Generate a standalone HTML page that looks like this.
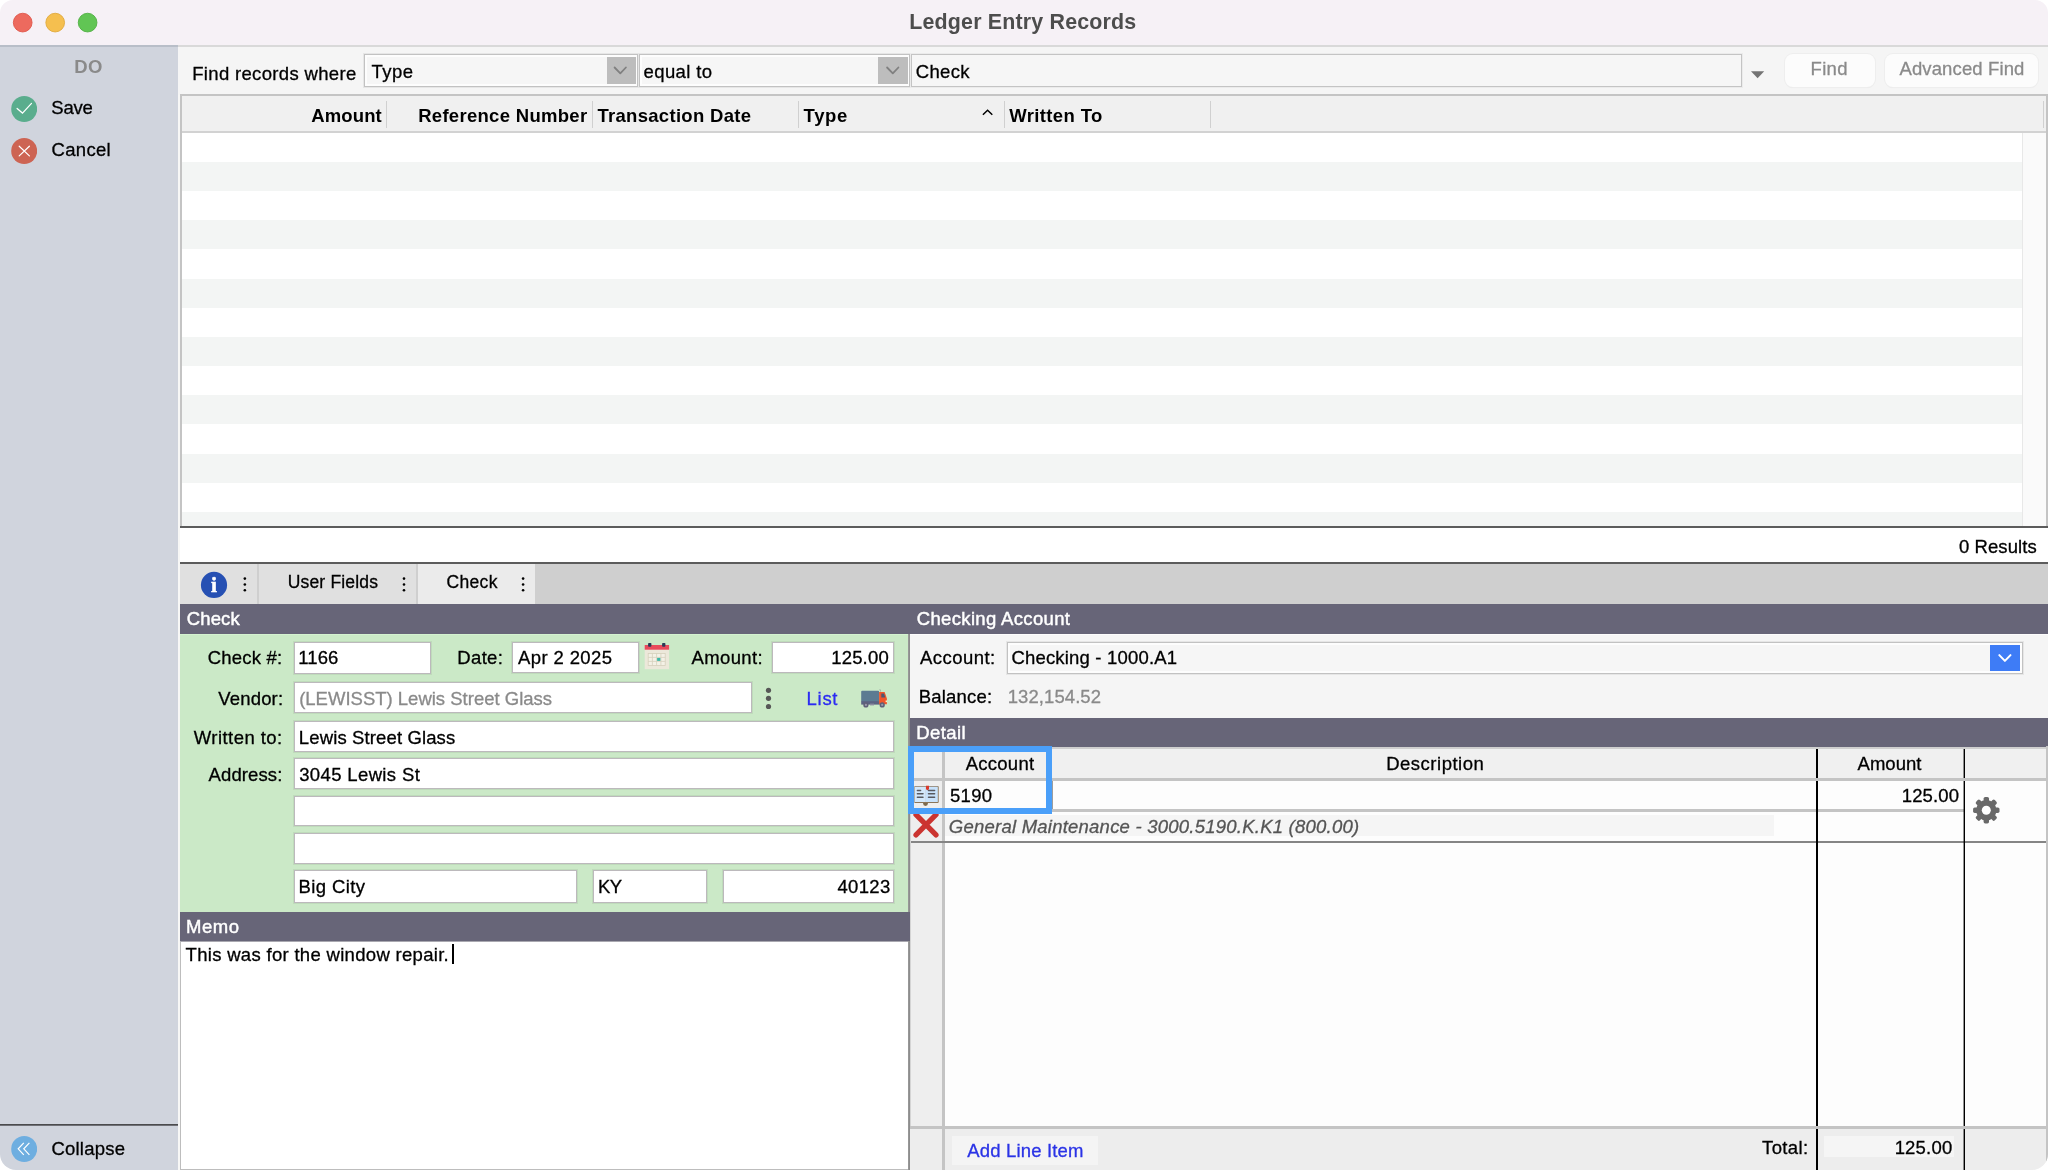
<!DOCTYPE html>
<html lang="en">
<head>
<meta charset="utf-8">
<title>Ledger Entry Records</title>
<style>
*{box-sizing:border-box;margin:0;padding:0}
html,body{width:2048px;height:1170px;background:#fff;overflow:hidden}
body{font-family:"Liberation Sans",sans-serif;font-size:18.5px;color:#000;--bo:16.4px}
#win{position:absolute;left:0;top:0;width:2048px;height:1170px;overflow:hidden;border-radius:13px 13px 16px 16px;background:#fff;will-change:transform}
.abs{position:absolute}
.t{position:absolute;white-space:nowrap;line-height:20px;height:20px;font-size:18.5px;-webkit-text-stroke:0.3px currentColor}
.b{-webkit-text-stroke:0}
.b{font-weight:bold}
.r{text-align:right}
.w{color:#fff;-webkit-text-stroke:0.45px #fff}
.g{color:#8a8a8a}
/* title bar */
#titlebar{left:0;top:0;width:2048px;height:45px;background:#f6f1f6}
#tline{left:0;top:45px;width:2048px;height:2px;background:#d9d9d9}
.tl{position:absolute;top:12.8px;width:19.6px;height:19.6px;border-radius:50%}
/* sidebar */
#side{left:0;top:47px;width:178px;height:1123px;background:#d0d4dd}
#sideline{left:0;top:45px;width:178px;height:2px;background:#b8bec8}
/* find bar */
#find{left:178px;top:47px;width:1870px;height:48px;background:#f5f5f5}
.sel{position:absolute;top:54px;height:33px;background:#f6f6f6;border:1px solid #c2c2c2;box-shadow:0 0 0 1px #e6e6e6,inset 0 0 0 2px #fdfdfd}
.tin{position:absolute;top:54px;height:33px;background:#f6f6f6;border:1px solid #c4c4c4;box-shadow:0 0 0 1px #ebebeb}
.ddb{position:absolute;top:57px;width:30px;height:27px;background:#bdbdbd}
.btn{position:absolute;top:54px;height:33px;border-radius:8px;background:#fcfcfc;box-shadow:0 0 0 1px #eeeeee,0 1px 1px rgba(0,0,0,.06)}
/* grid */
#grid{left:180px;top:94px;width:1868px;height:432px;background:#fff;border:2px solid #c4c4c4;border-bottom:none}
#ghead{left:182px;top:96px;width:1864px;height:35px;background:#f0f0f0}
#gline{left:182px;top:131px;width:1864px;height:2px;background:#d2d2d2}
.row{position:absolute;left:182px;width:1840px;background:#f3f5f4}
.hs{position:absolute;top:101px;width:1px;height:27px;background:#d0d0d0}
#scroll{left:2022px;top:133px;width:24px;height:393px;background:#fafafa;border-left:1px solid #e8e8e8}
.dark{position:absolute;height:2px;background:#5c5c5c}
/* tabs */
#tabs{left:180px;top:564px;width:1868px;height:40px;background:#cfcfcf}
.tab{position:absolute;top:564px;height:40px;background:#e0e0e0}
/* section headers */
.sh{position:absolute;height:30px;background:#676578}
/* form */
#green{left:180px;top:634px;width:728px;height:278px;background:#cbe9c7;box-shadow:inset 0 1px 0 #d4f2d0}
.in{position:absolute;background:#fff;border:1px solid #bcb9bc;box-shadow:0 0 0 1px rgba(0,0,0,.06)}
#memo{left:180px;top:941px;width:729px;height:229px;background:#fff;border-left:1px solid #bdbdbd;border-bottom:1px solid #bdbdbd;border-top:1px solid #a9a8b0}
.vsep{position:absolute;left:908px;width:2px;background:linear-gradient(90deg,#979797 0 1px,#8d8d8d 1px 2px)}
#rpanel{left:910px;top:634px;width:1138px;height:84px;background:#f5f5f5;border-top:1px solid #fcfcfc}
/* detail */
#dt{left:910px;top:747px;width:1138px;height:423px;background:#fdfdfd}
#dth{left:910px;top:747px;width:1138px;height:31px;background:#f0f0f0;border-top:2px solid #cfcfcf}
#dticon{left:910px;top:780px;width:32px;height:390px;background:#eeeeee;border-left:1px solid #d4d4d4}
#dtfoot{left:910px;top:1128px;width:1138px;height:42px;background:#ededed}
.gl{position:absolute;background:#c4c4c4}
.bl{position:absolute;background:#000;width:2px}
#ring{left:908px;top:746px;width:144px;height:68px;border:6px solid #4a9ff9}
</style>
</head>
<body>
<div id="win">

<!-- ===== title bar ===== -->
<div id="titlebar" class="abs"></div>
<div id="tline" class="abs"></div>
<svg class="abs" style="left:0;top:0" width="110" height="45" viewBox="0 0 110 45"><circle cx="22.7" cy="22.6" r="9.35" fill="#ed6a5e" stroke="#e0574b" stroke-width="0.9"/><circle cx="55.2" cy="22.6" r="9.35" fill="#f5bf4f" stroke="#e0a93c" stroke-width="0.9"/><circle cx="87.6" cy="22.6" r="9.35" fill="#61c554" stroke="#50b043" stroke-width="0.9"/></svg>
<div class="t b" style="left:909.29px;top:8px;font-size:21.4px;line-height:28px;height:28px;color:#4d4d4d;letter-spacing:0.181px">Ledger Entry Records</div>

<!-- ===== sidebar ===== -->
<div class="abs" style="left:178px;top:47px;width:2px;height:1123px;background:#f7f7f6"></div>
<div id="side" class="abs"></div>
<div id="sideline" class="abs"></div>
<div class="t b" style="left:74.15px;top:57px;color:#8a8a8a;letter-spacing:0.545px">DO</div>
<svg class="abs" style="left:11px;top:95.8px" width="26.4" height="26.4" viewBox="0 0 26.4 26.4"><circle cx="13.2" cy="13" r="13" fill="#5aad8d"/><path d="M6.1 12.5 L11.5 17.1 L20.5 7.4" fill="none" stroke="#fff" stroke-width="1.25" stroke-linecap="round" stroke-linejoin="miter"/></svg>
<div class="t" style="left:51.29px;top:98px;letter-spacing:-0.184px">Save</div>
<svg class="abs" style="left:11px;top:137.8px" width="26.4" height="26.4" viewBox="0 0 26.4 26.4"><circle cx="13.2" cy="13" r="13" fill="#cd6453"/><path d="M8.2 8.2 L18.4 17.9 M18.4 8.2 L8.2 17.9" fill="none" stroke="#fff" stroke-width="1.2" stroke-linecap="round"/></svg>
<div class="t" style="left:51.45px;top:140px;letter-spacing:0.341px">Cancel</div>
<div class="dark" style="left:0;top:1124px;width:178px;background:linear-gradient(#4b4b4d 0 1px,#6f7076 1px 2px)"></div>
<svg class="abs" style="left:11px;top:1136px" width="26.4" height="26.4" viewBox="0 0 26.4 26.4"><circle cx="13.2" cy="13" r="13" fill="#6eaee0"/><path d="M12.8 6.8 L7.2 12.8 L12.8 18.8 M18.4 6.8 L12.8 12.8 L18.4 18.8" fill="none" stroke="#fff" stroke-width="1.2" stroke-linecap="butt" stroke-linejoin="miter"/></svg>
<div class="t" style="left:51.45px;top:1139px;letter-spacing:0.226px">Collapse</div>

<!-- ===== find bar ===== -->
<div id="find" class="abs"></div>
<div class="t" style="left:192.18px;top:64px;letter-spacing:0.338px">Find records where</div>
<div class="sel" style="left:364px;width:274px"></div>
<div class="ddb" style="left:606.5px;width:29.3px"></div>
<svg class="abs" style="left:606px;top:57px" width="30" height="27" viewBox="0 0 30 27"><path d="M8.6 10.5 L14.3 16.4 L19.9 10.5" fill="none" stroke="#808080" stroke-width="1.8" stroke-linecap="round" stroke-linejoin="round"/></svg>
<div class="t" style="left:371.60px;top:62px;letter-spacing:0.433px">Type</div>
<div class="sel" style="left:639px;width:271px"></div>
<div class="ddb" style="left:877.5px;width:30.5px"></div>
<svg class="abs" style="left:878px;top:57px" width="30" height="27" viewBox="0 0 30 27"><path d="M9.1 10.5 L14.8 16.4 L20.4 10.5" fill="none" stroke="#808080" stroke-width="1.8" stroke-linecap="round" stroke-linejoin="round"/></svg>
<div class="t" style="left:643.60px;top:62px;letter-spacing:0.367px">equal to</div>
<div class="tin" style="left:911px;width:831px"></div>
<div class="t" style="left:915.73px;top:62px;letter-spacing:0.359px">Check</div>
<svg class="abs" style="left:1748px;top:68px" width="20" height="14" viewBox="0 0 20 14"><path d="M3 3.2 L16.2 3.2 L9.6 10.2 Z" fill="#747474"/></svg>
<div class="btn" style="left:1785px;width:90px"></div>
<div class="t g" style="left:1810.56px;top:59px;letter-spacing:0.323px">Find</div>
<div class="btn" style="left:1885px;width:153px"></div>
<div class="t g" style="left:1899.45px;top:59px;letter-spacing:0.124px">Advanced Find</div>

<!-- ===== results grid ===== -->
<div id="grid" class="abs"></div>
<div id="ghead" class="abs"></div>
<div id="gline" class="abs"></div>
<div class="row" style="top:162px;height:29px"></div>
<div class="row" style="top:220px;height:29px"></div>
<div class="row" style="top:279px;height:29px"></div>
<div class="row" style="top:337px;height:29px"></div>
<div class="row" style="top:395px;height:29px"></div>
<div class="row" style="top:454px;height:29px"></div>
<div class="row" style="top:512px;height:14px"></div>
<div id="scroll" class="abs"></div>
<div class="t b" style="left:311.20px;top:106px;letter-spacing:0.145px">Amount</div>
<div class="t b" style="left:418.18px;top:106px;letter-spacing:0.295px">Reference Number</div>
<div class="t b" style="left:597.42px;top:106px;letter-spacing:0.299px">Transaction Date</div>
<div class="t b" style="left:803.56px;top:106px;letter-spacing:0.661px">Type</div>
<div class="t b" style="left:1009.28px;top:106px;letter-spacing:0.359px">Written To</div>
<svg class="abs" style="left:978px;top:106px" width="20" height="14" viewBox="0 0 20 14"><path d="M4.9 8.8 L9.6 4.3 L14.3 8.8" fill="none" stroke="#000" stroke-width="1.5" stroke-linecap="butt" stroke-linejoin="miter"/></svg>
<div class="hs" style="left:386px"></div>
<div class="hs" style="left:592px"></div>
<div class="hs" style="left:798px"></div>
<div class="hs" style="left:1004px"></div>
<div class="hs" style="left:1210px"></div>
<div class="hs" style="left:2043px"></div>
<div class="dark" style="left:180px;top:526px;width:1868px"></div>
<div class="t" style="left:1958.88px;top:537px;letter-spacing:0.093px">0 Results</div>
<div class="dark" style="left:180px;top:562px;width:1868px"></div>

<!-- ===== tabs ===== -->
<div id="tabs" class="abs"></div>
<div class="tab" style="left:180px;width:77px"></div>
<div class="tab" style="left:259px;width:157px"></div>
<div class="tab" style="left:418px;width:117px;background:#ebebeb"></div>
<svg class="abs" style="left:200px;top:571px" width="28" height="28" viewBox="0 0 28 28"><circle cx="14" cy="13.9" r="13.1" fill="#2650b3"/><text x="14.1" y="21.3" text-anchor="middle" font-family="Liberation Serif, serif" font-weight="bold" font-size="21.5" fill="#fff" stroke="#fff" stroke-width="0.5">i</text></svg>
<svg class="abs" style="left:241px;top:574px" width="8" height="20" viewBox="0 0 8 20"><circle cx="3.85" cy="4.6" r="1.3"/><circle cx="3.85" cy="10.5" r="1.3"/><circle cx="3.85" cy="16.3" r="1.3"/></svg>
<svg class="abs" style="left:400px;top:574px" width="8" height="20" viewBox="0 0 8 20"><circle cx="4" cy="4.6" r="1.3"/><circle cx="4" cy="10.5" r="1.3"/><circle cx="4" cy="16.3" r="1.3"/></svg>
<svg class="abs" style="left:519px;top:574px" width="8" height="20" viewBox="0 0 8 20"><circle cx="4.1" cy="4.6" r="1.3"/><circle cx="4.1" cy="10.5" r="1.3"/><circle cx="4.1" cy="16.3" r="1.3"/></svg>
<div class="t" style="left:287.66px;top:572px;letter-spacing:0.189px;font-size:17.5px">User Fields</div>
<div class="t" style="left:446.53px;top:572px;letter-spacing:0.324px;font-size:17.5px">Check</div>

<!-- ===== left: check form ===== -->
<div class="sh" style="left:180px;top:604px;width:1868px"></div>
<div class="t w" style="left:186.65px;top:609px;letter-spacing:0.182px">Check</div>
<div class="t w" style="left:916.76px;top:609px;letter-spacing:0.338px">Checking Account</div>
<div id="green" class="abs"></div>
<div class="t" style="left:207.82px;top:648px;letter-spacing:0.201px">Check #:</div>
<div class="in" style="left:294px;top:642px;width:137px;height:32px"></div>
<div class="t" style="left:298.19px;top:648px;letter-spacing:0.143px">1166</div>
<div class="t" style="left:457.37px;top:648px;letter-spacing:0.319px">Date:</div>
<div class="in" style="left:512px;top:642px;width:127px;height:31px"></div>
<div class="t" style="left:518.05px;top:648px;letter-spacing:0.381px">Apr 2 2025</div>
<svg class="abs" style="left:644px;top:642px" width="26" height="28" viewBox="0 0 26 28"><rect x="0.7" y="3" width="24.4" height="24.2" fill="#ece8da"/><rect x="0.7" y="3" width="24.4" height="4.7" fill="#e94b5b"/><rect x="4.1" y="1" width="3.3" height="3.7" rx="0.8" fill="#2b3a55"/><rect x="18.1" y="1" width="3.3" height="3.7" rx="0.8" fill="#2b3a55"/><rect x="4.2" y="11.4" width="17" height="12" fill="#f4f1e6" stroke="#d5d0bc" stroke-width="0.8"/><path d="M8.4 11.4 V23.4 M12.6 11.4 V23.4 M16.9 11.4 V23.4 M4.2 15.4 H21.2 M4.2 19.4 H21.2" stroke="#d5d0bc" stroke-width="0.8" fill="none"/><rect x="13.1" y="15.9" width="3.3" height="3" fill="#3db7a6"/></svg>
<div class="t" style="left:691.56px;top:648px;letter-spacing:0.361px">Amount:</div>
<div class="in" style="left:772px;top:642px;width:122px;height:31px"></div>
<div class="t" style="left:831.20px;top:648px;letter-spacing:0.182px">125.00</div>

<div class="t" style="left:218.34px;top:689px;letter-spacing:0.159px">Vendor:</div>
<div class="in" style="left:294px;top:682px;width:458px;height:31px"></div>
<div class="t g" style="left:299.17px;top:689px;letter-spacing:-0.001px">(LEWISST) Lewis Street Glass</div>
<svg class="abs" style="left:764px;top:686px" width="10" height="26" viewBox="0 0 10 26"><circle cx="4.5" cy="4.3" r="2.6" fill="#575757"/><circle cx="4.5" cy="12.3" r="2.6" fill="#575757"/><circle cx="4.5" cy="20.5" r="2.6" fill="#575757"/></svg>
<div class="t" style="left:806.56px;top:689px;color:#2b2bf2;letter-spacing:0.726px">List</div>
<svg class="abs" style="left:859px;top:687px" width="30" height="22" viewBox="0 0 30 22"><path d="M20.9 2.2 L21.6 4.6" stroke="#8a8f99" stroke-width="0.7" fill="none"/><rect x="2.2" y="3.8" width="17.9" height="11.2" rx="0.9" fill="#5c7b92"/><rect x="2.2" y="14.2" width="18.5" height="3.4" fill="#5b6282"/><path d="M20.1 5.1 H25.6 L27.9 11.4 V17.2 H20.1 Z" fill="#f1562b"/><path d="M22.3 6.4 H25 L26.3 10.6 H22.3 Z" fill="#4d5873"/><rect x="26.6" y="13.5" width="1.4" height="1.6" fill="#fff3c4"/><circle cx="6.9" cy="17.9" r="2.6" fill="#5f5f77"/><circle cx="6.9" cy="17.9" r="1.1" fill="#9a9aae"/><circle cx="23.2" cy="17.9" r="2.6" fill="#5f5f77"/><circle cx="23.2" cy="17.9" r="1.1" fill="#9a9aae"/><rect x="11" y="16.6" width="4" height="1.8" fill="#8a8aa0"/></svg>

<div class="t" style="left:193.69px;top:728px;letter-spacing:0.457px">Written to:</div>
<div class="in" style="left:294px;top:721px;width:600px;height:31px"></div>
<div class="t" style="left:298.87px;top:728px;letter-spacing:0.125px">Lewis Street Glass</div>

<div class="t" style="left:208.58px;top:765px;letter-spacing:0.101px">Address:</div>
<div class="in" style="left:294px;top:758px;width:600px;height:31px"></div>
<div class="t" style="left:299.23px;top:765px;letter-spacing:0.362px">3045 Lewis St</div>
<div class="in" style="left:294px;top:796px;width:600px;height:30px"></div>
<div class="in" style="left:294px;top:833px;width:600px;height:31px"></div>
<div class="in" style="left:294px;top:870px;width:283px;height:33px"></div>
<div class="t" style="left:298.58px;top:877px;letter-spacing:0.380px">Big City</div>
<div class="in" style="left:593px;top:870px;width:114px;height:33px"></div>
<div class="t" style="left:598.06px;top:877px;letter-spacing:-0.517px">KY</div>
<div class="in" style="left:723px;top:870px;width:171px;height:33px"></div>
<div class="t" style="left:837.39px;top:877px;letter-spacing:0.341px">40123</div>

<div class="sh" style="left:180px;top:912px;width:730px;height:29px"></div>
<div class="t w" style="left:185.96px;top:917px;letter-spacing:0.596px">Memo</div>
<div id="memo" class="abs"></div>
<div class="t" style="left:185.58px;top:945px;letter-spacing:0.307px">This was for the window repair.</div>
<div class="abs" style="left:452px;top:944px;width:2px;height:20px;background:#000"></div>


<!-- ===== right: checking account ===== -->
<div id="rpanel" class="abs"></div>
<div class="t" style="left:920.05px;top:648px;letter-spacing:0.452px">Account:</div>
<div class="sel" style="left:1007px;top:642px;width:1016px;height:32px"></div>
<div class="abs" style="left:1989.7px;top:644.8px;width:30.5px;height:26.2px;background:#3e7cf6"></div>
<svg class="abs" style="left:1990px;top:645px" width="30" height="26" viewBox="0 0 30 26"><path d="M9.3 10.1 L14.9 15.9 L20.5 10.1" fill="none" stroke="#fff" stroke-width="2" stroke-linecap="round" stroke-linejoin="round"/></svg>
<div class="t" style="left:1011.45px;top:648px;letter-spacing:0.183px">Checking - 1000.A1</div>
<div class="t" style="left:918.75px;top:687px;letter-spacing:0.208px">Balance:</div>
<div class="t g" style="left:1007.63px;top:687px;letter-spacing:0.091px">132,154.52</div>
<div class="sh" style="left:910px;top:718px;width:1138px;height:29px"></div>
<div class="vsep" style="top:634px;height:278px"></div>
<div class="vsep" style="top:941px;height:229px"></div>
<div class="t w" style="left:916.31px;top:723px;letter-spacing:0.398px">Detail</div>

<!-- ===== detail table ===== -->
<div id="dt" class="abs"></div>
<div id="dth" class="abs"></div>
<div id="dticon" class="abs"></div>
<div id="dtfoot" class="abs"></div>
<div class="gl" style="left:942px;top:749px;width:3px;height:421px"></div>
<div class="gl" style="left:910px;top:778px;width:1136px;height:3px"></div>
<div class="gl" style="left:910px;top:809px;width:1054px;height:3px"></div>
<div class="abs" style="left:945px;top:815px;width:829px;height:21px;background:#f5f5f5"></div>
<div class="abs" style="left:911px;top:841px;width:1135px;height:2px;background:#858585"></div>
<div class="bl" style="left:1816px;top:749px;height:29px"></div>
<div class="bl" style="left:1816px;top:781px;height:345px"></div>
<div class="bl" style="left:1816px;top:1129px;height:41px"></div>
<div class="bl" style="left:1963px;top:749px;height:29px;background:linear-gradient(90deg,rgba(0,0,0,.42) 0 1px,#000 1px 2px)"></div>
<div class="bl" style="left:1963px;top:781px;height:345px;background:linear-gradient(90deg,rgba(0,0,0,.42) 0 1px,#000 1px 2px)"></div>
<div class="bl" style="left:1963px;top:1129px;height:41px;background:linear-gradient(90deg,rgba(0,0,0,.42) 0 1px,#000 1px 2px)"></div>
<div class="gl" style="left:910px;top:1126px;width:1136px;height:3px"></div>
<div class="gl" style="left:2046px;top:746px;width:2px;height:424px"></div>
<div class="t" style="left:965.76px;top:754px;letter-spacing:0.244px">Account</div>
<div class="t" style="left:1386.18px;top:754px;letter-spacing:0.509px">Description</div>
<div class="t" style="left:1857.56px;top:754px;letter-spacing:0.019px">Amount</div>
<div class="t" style="left:949.95px;top:786px;letter-spacing:0.308px">5190</div>
<div class="t" style="left:1901.74px;top:786px;letter-spacing:0.127px">125.00</div>
<div class="t" style="left:948.85px;top:817px;font-style:italic;color:#555;letter-spacing:0.232px">General Maintenance - 3000.5190.K.K1 (800.00)</div>
<div class="abs" style="left:952px;top:1136px;width:146px;height:29px;background:#f4f4f4"></div>
<div class="t" style="left:967.33px;top:1141px;color:#2a33e6;letter-spacing:0.164px">Add Line Item</div>
<div class="t" style="left:1762.12px;top:1138px;letter-spacing:0.356px">Total:</div>
<div class="abs" style="left:1824px;top:1136px;width:130px;height:21px;background:#f5f5f5"></div>
<div class="t" style="left:1894.64px;top:1138px;letter-spacing:0.197px">125.00</div>
<svg class="abs" style="left:913px;top:784px" width="28" height="24" viewBox="0 0 28 24"><circle cx="12.5" cy="19.6" r="2.4" fill="#7d6a4d"/><rect x="1.2" y="2" width="24.5" height="16.9" rx="1" fill="#8b7558"/><rect x="1.6" y="2.7" width="11.3" height="15.3" fill="#d3e8fb"/><rect x="12.9" y="2.7" width="11.9" height="15.3" fill="#c8e2fb"/><path d="M4.4 6.5 H7.6 M4.4 9.8 H10 M4.4 13.2 H10 M15.5 6.5 H21.6 M15.5 9.8 H21.6 M15.5 13.2 H21.6" stroke="#58595f" stroke-width="1.5" stroke-linecap="round" fill="none"/><path d="M13 1.7 H16 V5.2 L14.5 6.2 L13 5.2 Z" fill="#d93a2b"/></svg>
<svg class="abs" style="left:911px;top:812px" width="30" height="28" viewBox="0 0 30 28"><path d="M5 2.7 L25 22.9 M25 2.7 L5 22.9" stroke="#cb3430" stroke-width="5.2" stroke-linecap="round" fill="none"/></svg>
<svg class="abs" style="left:1972px;top:796px" width="29" height="29" viewBox="-14.5 -14.5 29 29"><g transform="translate(-0.2,-0.3)" fill="#696969"><circle r="10.2"/><rect x="-2.7" y="-13.2" width="5.4" height="6" rx="1.6" transform="rotate(0)"/><rect x="-2.7" y="-13.2" width="5.4" height="6" rx="1.6" transform="rotate(45)"/><rect x="-2.7" y="-13.2" width="5.4" height="6" rx="1.6" transform="rotate(90)"/><rect x="-2.7" y="-13.2" width="5.4" height="6" rx="1.6" transform="rotate(135)"/><rect x="-2.7" y="-13.2" width="5.4" height="6" rx="1.6" transform="rotate(180)"/><rect x="-2.7" y="-13.2" width="5.4" height="6" rx="1.6" transform="rotate(225)"/><rect x="-2.7" y="-13.2" width="5.4" height="6" rx="1.6" transform="rotate(270)"/><rect x="-2.7" y="-13.2" width="5.4" height="6" rx="1.6" transform="rotate(315)"/><circle r="4.5" fill="#fff"/></g></svg>
<div class="abs" style="left:1052px;top:781px;width:1px;height:28px;background:#9d9d9d"></div>
<div id="ring" class="abs"></div>

</div>
</body>
</html>
